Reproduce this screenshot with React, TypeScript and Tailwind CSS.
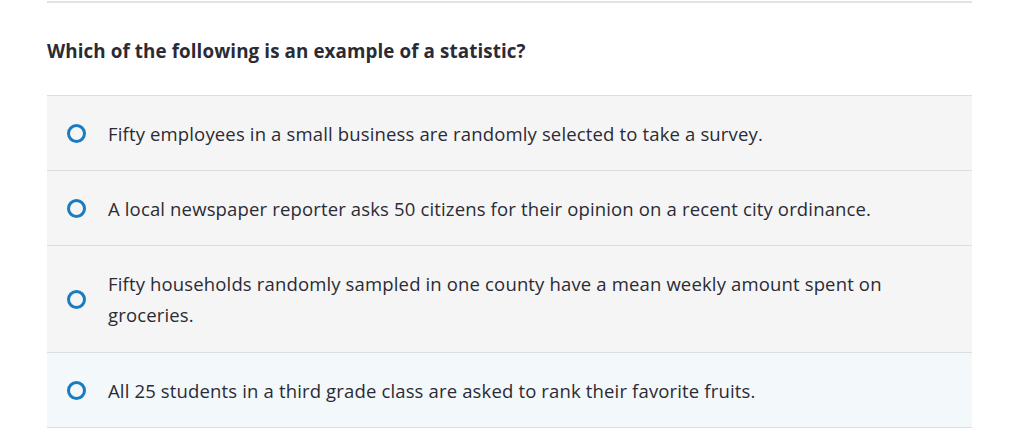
const options = [
  "Fifty employees in a small business are randomly selected to take a survey.",
  "A local newspaper reporter asks 50 citizens for their opinion on a recent city ordinance.",
  "Fifty households randomly sampled in one county have a mean weekly amount spent on groceries.",
  "All 25 students in a third grade class are asked to rank their favorite fruits.",
];

export default function App() {
  return (
    <div className="w-[1033px] h-[431px] bg-white font-['Open_Sans',sans-serif] text-[#2b2b35] overflow-hidden">
      <div className="ml-[47px] w-[925px] border-t-2 border-[#e2e2e2] mt-px">
        <h2 className="pt-[36px] pb-[32px] text-[18.8px] leading-[24px] font-bold tracking-[0.1px]">
          Which of the following is an example of a statistic?
        </h2>

        {/* Answer choices */}
        <div className="border-t border-[#dedede]">
          {options.map((opt, i) => (
            <div
              key={i}
              className={`flex items-center border-b border-[#dedede] pl-[20px] ${
                i === 2 ? "py-[22px]" : "h-[75px]"
              } ${i === 3 ? "bg-[#f3f8fb]" : "bg-[#f5f5f5]"}`}
            >
              <span className="w-[19px] h-[19px] rounded-full border-[3px] border-[#1a7cc0] shrink-0" />
              <p className="ml-[22px] max-w-[780px] text-[18.5px] leading-[31px] tracking-[0.15px]">{opt}</p>
            </div>
          ))}
        </div>
      </div>
    </div>
  );
}
